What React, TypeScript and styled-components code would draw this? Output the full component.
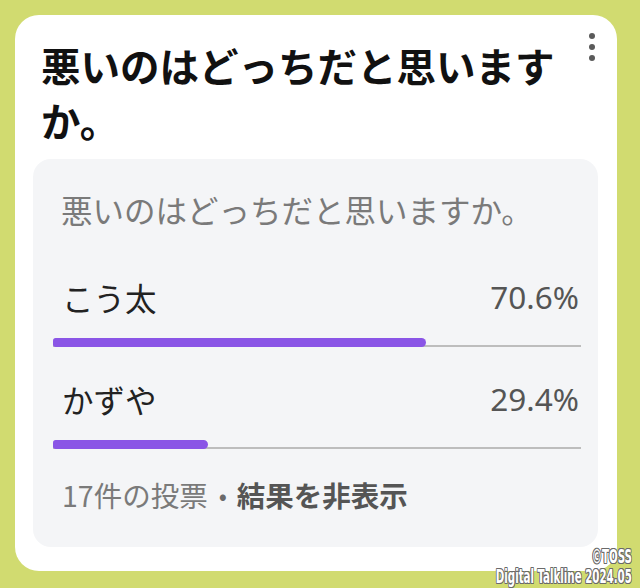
import React from "react";
import styled, { createGlobalStyle } from "styled-components";

const Global = createGlobalStyle`
  html, body { margin: 0; padding: 0; }
  body {
    background: #d1db70;
    font-family: "Noto Sans", "Noto Sans CJK JP", sans-serif;
  }
`;

const Page = styled.div`
  position: relative;
  width: 640px;
  height: 588px;
  padding: 15px 23px 17px 15px;
  box-sizing: border-box;
  background: #d1db70;
`;

const Card = styled.div`
  background: #ffffff;
  border-radius: 24px;
  height: 100%;
  box-sizing: border-box;
  padding: 22px 19px 24px 18px;
  display: flex;
  flex-direction: column;
`;

const Header = styled.div`
  display: flex;
  align-items: flex-start;
  justify-content: space-between;
`;

const Title = styled.h1`
  margin: 0;
  padding-left: 8px;
  width: 530px;
  font-family: "Noto Sans CJK JP", sans-serif;
  font-weight: 700;
  font-size: 39.5px;
  line-height: 55px;
  color: #111111;
`;

const MenuButton = styled.button`
  border: 0;
  background: none;
  padding: 0;
  margin: -7px -6px 0 0;
  width: 24px;
  height: 34px;
  display: flex;
  align-items: center;
  justify-content: center;
`;

const Panel = styled.div`
  margin-top: 12px;
  background: #f4f5f7;
  border-radius: 18px;
  padding: 28px 17px 30px 20px;
  display: flex;
  flex-direction: column;
  flex: 1;
`;

const Question = styled.div`
  padding-left: 8px;
  font-family: "Noto Sans CJK JP", sans-serif;
  font-size: 31.5px;
  line-height: 44px;
  color: #7a7a7a;
`;

const Option = styled.div<{ $first?: boolean }>`
  margin-top: ${(p) => (p.$first ? "44px" : "30px")};
  display: flex;
  flex-direction: column;
`;

const OptionRow = styled.div`
  display: flex;
  justify-content: space-between;
  align-items: center;
  padding: 0 2px 0 9px;
  font-size: 31.5px;
  line-height: 44px;
`;

const Label = styled.span`
  font-family: "Noto Sans CJK JP", sans-serif;
  color: #222222;
`;

const Percent = styled.span`
  font-family: "Noto Sans", "Noto Sans CJK JP", sans-serif;
  color: #555555;
`;

const Track = styled.div`
  margin-top: 19px;
  position: relative;
  height: 9px;
  &::after {
    content: "";
    position: absolute;
    left: 0;
    right: 0;
    bottom: 0;
    height: 2px;
    background: #bdbdbd;
  }
`;

const Fill = styled.div`
  position: relative;
  z-index: 1;
  height: 9px;
  border-radius: 3px 5px 5px 3px;
  background: #8a55e6;
`;

const Footer = styled.div`
  margin-top: 26px;
  padding-left: 9px;
  display: flex;
  align-items: center;
  font-family: "Noto Sans CJK JP", sans-serif;
  font-size: 28.5px;
  line-height: 40px;
  color: #7a7a7a;
`;

const Bullet = styled.span`
  margin: 0 10px 0 11px;
  font-size: 24px;
  color: #6a6a6a;
`;

const Strong = styled.span`
  font-weight: 700;
  color: #555555;
`;

const Watermark = styled.div`
  position: absolute;
  right: 8px;
  bottom: 2px;
  text-align: right;
  transform: scaleX(0.6);
  transform-origin: right bottom;
  font-family: "Liberation Sans Narrow", "DejaVu Sans Condensed", sans-serif;
  font-weight: 700;
  font-size: 19px;
  line-height: 20px;
  color: #ffffff;
  text-shadow: 1px 0 0 #6a6a6a, -1px 0 0 #6a6a6a, 0 1px 0 #6a6a6a, 0 -1px 0 #6a6a6a,
    1px 1px 0 #6a6a6a, -1px -1px 0 #6a6a6a, 1px -1px 0 #6a6a6a, -1px 1px 0 #6a6a6a;
`;

const Dots = () => (
  <svg width="8" height="30" viewBox="0 0 8 30">
    <circle cx="4" cy="4" r="3" fill="#5a5a5a" />
    <circle cx="4" cy="15" r="3" fill="#5a5a5a" />
    <circle cx="4" cy="26" r="3" fill="#5a5a5a" />
  </svg>
);

const options = [
  { name: "こう太", pct: 70.6 },
  { name: "かずや", pct: 29.4 },
];

export default function App() {
  return (
    <>
      <Global />
      <Page>
        <Card>
          <Header>
            <Title>悪いのはどっちだと思いますか。</Title>
            <MenuButton aria-label="menu">
              <Dots />
            </MenuButton>
          </Header>
          <Panel>
            <Question>悪いのはどっちだと思いますか。</Question>
            {options.map((o, i) => (
              <Option key={o.name} $first={i === 0}>
                <OptionRow>
                  <Label>{o.name}</Label>
                  <Percent>{o.pct}%</Percent>
                </OptionRow>
                <Track>
                  <Fill style={{ width: `${o.pct}%` }} />
                </Track>
              </Option>
            ))}
            <Footer>
              17件の投票<Bullet>•</Bullet>
              <Strong>結果を非表示</Strong>
            </Footer>
          </Panel>
        </Card>
        <Watermark>
          ©TOSS
          <br />
          Digital Talkline 2024.05
        </Watermark>
      </Page>
    </>
  );
}
